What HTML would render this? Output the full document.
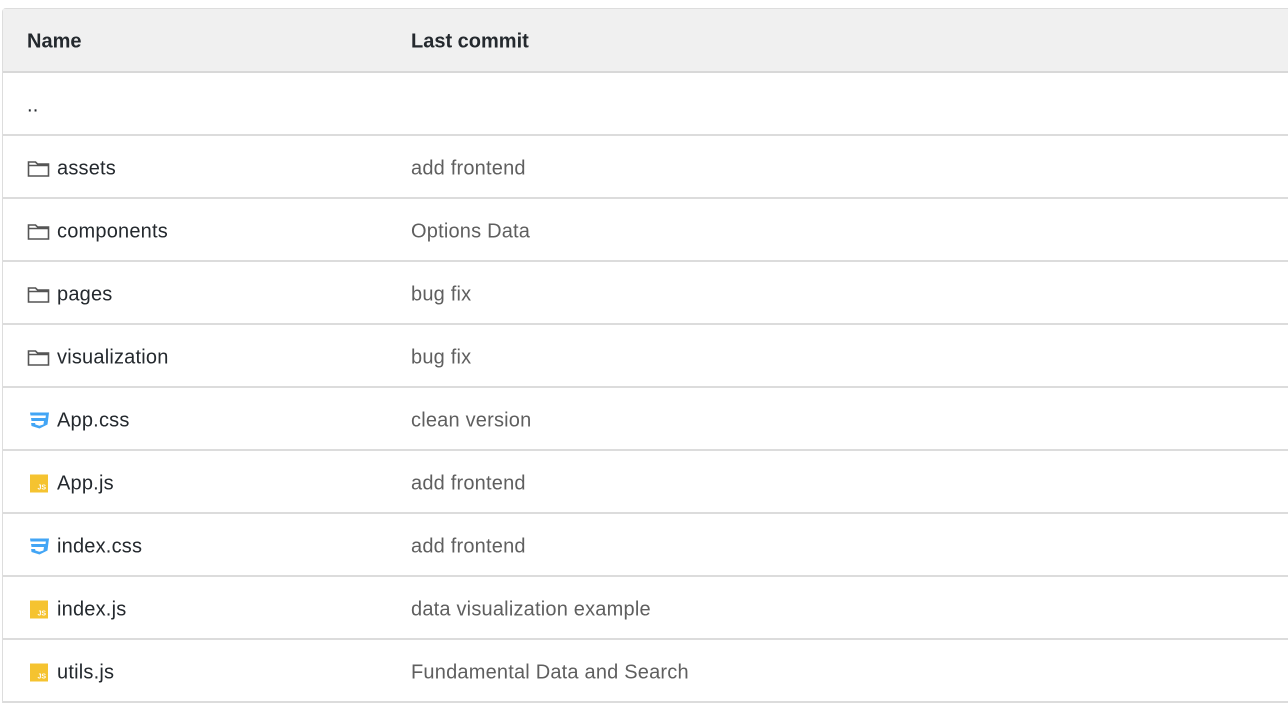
<!DOCTYPE html><html><head><style>
body{margin:0;background:#fff;font-family:"Liberation Sans",sans-serif;}
.t{position:absolute;left:2px;top:8px;width:1300px;border-left:1px solid #ddd;border-top:1px solid #ddd;border-radius:4px 0 0 0;}
.h{height:62px;background:#f0f0f0;border-bottom:2px solid #d8d8d8;position:relative;font-weight:bold;font-size:20px;color:#24292e;}
.r{height:61px;border-bottom:2px solid #dcdcdc;position:relative;font-size:20px;letter-spacing:0.2px;}
.n{position:absolute;left:24px;top:calc(50% + 2px);transform:translateY(-50%);color:#24292e;display:flex;align-items:center;}
.c{position:absolute;left:408px;top:calc(50% + 2px);transform:translateY(-50%);color:#5f5f5f;}
.h .n,.h .c{color:#24292e}
.ic{width:24px;height:20px;margin-right:6px;display:inline-block;position:relative}
.js{width:18px;height:18px;background:#f5c330;margin:0 9px 0 3px;position:relative;font-size:7px;font-weight:bold;color:#fff;letter-spacing:0}
.js span{position:absolute;right:2px;bottom:1px}
</style></head><body><div class="t">
<div class="h"><div class="n">Name</div><div class="c">Last commit</div></div>
<div class="r"><div class="n">..</div></div>
<div class="r"><div class="n"><svg class="ic" viewBox="0 0 24 20"><path d="M1.5 3.5h7l2 2h11v12h-20z M1.5 7h20" fill="none" stroke="#555" stroke-width="1.6"/></svg>assets</div><div class="c">add frontend</div></div>
<div class="r"><div class="n"><svg class="ic" viewBox="0 0 24 20"><path d="M1.5 3.5h7l2 2h11v12h-20z M1.5 7h20" fill="none" stroke="#555" stroke-width="1.6"/></svg>components</div><div class="c">Options Data</div></div>
<div class="r"><div class="n"><svg class="ic" viewBox="0 0 24 20"><path d="M1.5 3.5h7l2 2h11v12h-20z M1.5 7h20" fill="none" stroke="#555" stroke-width="1.6"/></svg>pages</div><div class="c">bug fix</div></div>
<div class="r"><div class="n"><svg class="ic" viewBox="0 0 24 20"><path d="M1.5 3.5h7l2 2h11v12h-20z M1.5 7h20" fill="none" stroke="#555" stroke-width="1.6"/></svg>visualization</div><div class="c">bug fix</div></div>
<div class="r"><div class="n"><svg class="ic" viewBox="0 0 24 20"><path d="M3 2h19l-1.5 12-8 4-8-2.5-.4-3h4l.3 1.5 4 1.3 4-1.3.6-3.5H4.5L4 7.5h14.5l.4-2.5H3.5z" fill="#42a5f5"/></svg>App.css</div><div class="c">clean version</div></div>
<div class="r"><div class="n"><div class="js"><span>JS</span></div>App.js</div><div class="c">add frontend</div></div>
<div class="r"><div class="n"><svg class="ic" viewBox="0 0 24 20"><path d="M3 2h19l-1.5 12-8 4-8-2.5-.4-3h4l.3 1.5 4 1.3 4-1.3.6-3.5H4.5L4 7.5h14.5l.4-2.5H3.5z" fill="#42a5f5"/></svg>index.css</div><div class="c">add frontend</div></div>
<div class="r"><div class="n"><div class="js"><span>JS</span></div>index.js</div><div class="c">data visualization example</div></div>
<div class="r"><div class="n"><div class="js"><span>JS</span></div>utils.js</div><div class="c">Fundamental Data and Search</div></div>
</div></body></html>
